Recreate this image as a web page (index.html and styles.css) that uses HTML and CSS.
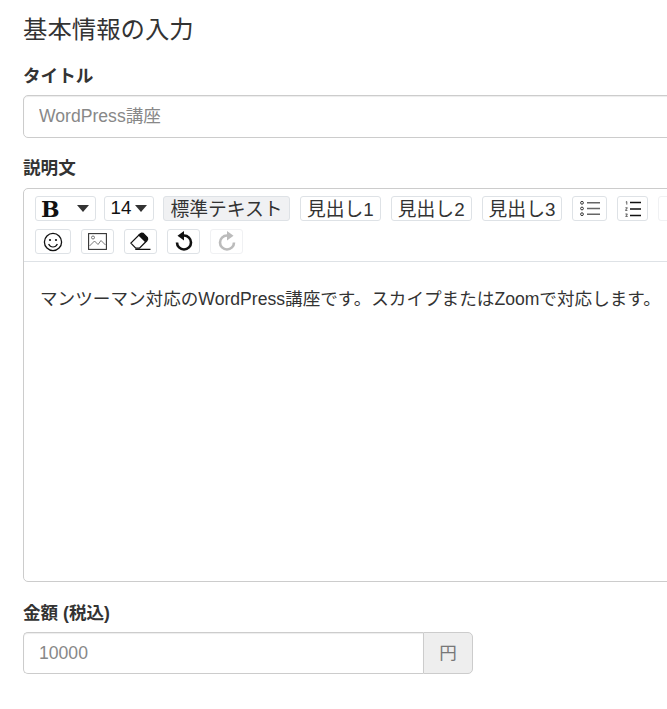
FILE: index.html
```html
<!DOCTYPE html>
<html lang="ja">
<head>
    <meta charset="UTF-8">
    <meta name="viewport" content="width=device-width, initial-scale=1.0">
    <title>基本情報の入力</title>
    <link rel="stylesheet" href="styles.css">
</head>
<body>
    <div class="page">
        <h2 class="page-title">基本情報の入力</h2>

        <div class="field field-title">
            <label class="field-label">タイトル</label>
            <input class="text-input" type="text" placeholder="WordPress講座">
        </div>

        <div class="field field-body">
            <label class="field-label">説明文</label>
            <div class="editor">
                <div class="toolbar">
                    <div class="toolbar-row">
                        <button class="tool tool-font"><span class="bold-b">B</span><span class="caret"></span></button>
                        <button class="tool tool-size"><span>14</span><span class="caret"></span></button>
                        <button class="tool tool-text tool-active">標準テキスト</button>
                        <button class="tool tool-text">見出し1</button>
                        <button class="tool tool-text">見出し2</button>
                        <button class="tool tool-text">見出し3</button>
                        <button class="tool tool-ul">
                            <svg width="20" height="15" viewBox="0 0 20 15">
                                <circle cx="2" cy="1.8" r="1.4" fill="none" stroke="#333" stroke-width="1"/>
                                <circle cx="2" cy="7.5" r="1.4" fill="none" stroke="#333" stroke-width="1"/>
                                <circle cx="2" cy="13.2" r="1.4" fill="none" stroke="#333" stroke-width="1"/>
                                <path d="M7 1.8h13M7 7.5h13M7 13.2h13" stroke="#666" stroke-width="1.5"/>
                            </svg>
                        </button>
                        <button class="tool tool-ol">
                            <svg width="16" height="16" viewBox="0 0 16 16">
                                <path d="M5 1.5h11M5 8h11M5 14.5h11" stroke="#111" stroke-width="1.5"/>
                                <path d="M.8 1l1-.4v3M.4 6.8h2l-2 2.6h2M.4 13h2l-1 1.2 1 1.2h-2" fill="none" stroke="#333" stroke-width=".8"/>
                            </svg>
                        </button>
                        <button class="tool tool-off tool-ol"></button>
                    </div>
                    <div class="toolbar-row">
                        <button class="tool tool-icon tool-smile">
                            <svg width="20" height="20" viewBox="0 0 20 20">
                                <circle cx="10" cy="10" r="8.6" fill="none" stroke="#111" stroke-width="1.3"/>
                                <circle cx="7" cy="8" r="1.1" fill="#111"/>
                                <circle cx="13" cy="8" r="1.1" fill="#111"/>
                                <path d="M5.6 12c1 2 2.6 3 4.4 3s3.4-1 4.4-3" fill="none" stroke="#111" stroke-width="1.2"/>
                            </svg>
                        </button>
                        <button class="tool tool-icon tool-image">
                            <svg width="19" height="17" viewBox="0 0 19 17">
                                <rect x=".6" y=".6" width="17.8" height="15.8" fill="none" stroke="#333" stroke-width="1.1"/>
                                <circle cx="5" cy="4.5" r="1.5" fill="none" stroke="#555" stroke-width=".8"/>
                                <path d="M1.5 13l5-5 3.5 3.5 3-4 4.5 4.5" fill="none" stroke="#555" stroke-width=".8"/>
                            </svg>
                        </button>
                        <button class="tool tool-icon tool-eraser">
                            <svg width="21" height="19" viewBox="0 0 20 18">
                                <path d="M.8 10.5L9.5 1.8 11 1l1.5.3 4 4 .3 1.5-.8 1.5-7 7H5.500z" fill="#fff" stroke="#111" stroke-width="1.2"/>
                                <path d="M9.5 1.8L11 1l1.5.3 4 4 .3 1.5-.8 1.5-1.5 1.5-7-7z" fill="#111"/>
                                <path d="M5 16.500h14.500" stroke="#111" stroke-width="1.2"/>
                            </svg>
                        </button>
                        <button class="tool tool-icon tool-undo">
                            <svg width="18" height="21" viewBox="0 0 18 21">
                                <path d="M7.5 4.5H9a7 7 0 1 1-7 7" fill="none" stroke="#111" stroke-width="2.6"/>
                                <path d="M9 0L2.5 4.7 9 9.5z" fill="#111"/>
                            </svg>
                        </button>
                        <button class="tool tool-icon tool-redo tool-off">
                            <svg width="18" height="21" viewBox="0 0 18 21">
                                <path d="M10.5 4.5H9a7 7 0 1 0 7 7" fill="none" stroke="#bbb" stroke-width="2.6"/>
                                <path d="M9 0l6.5 4.7L9 9.5z" fill="#bbb"/>
                            </svg>
                        </button>
                    </div>
                </div>
                <div class="editor-body">マンツーマン対応のWordPress講座です。スカイプまたはZoomで対応します。</div>
            </div>
        </div>

        <div class="field field-price">
            <label class="field-label">金額 (税込)</label>
            <div class="input-group">
                <input class="text-input" type="text" placeholder="10000">
                <span class="input-addon">円</span>
            </div>
        </div>
    </div>
</body>
</html>
```

FILE: styles.css
```css
html, body {
    margin: 0;
    height: 100%;
    overflow: hidden;
    background-color: #fff;
}
body {
    font-family: "Liberation Sans", "Noto Sans CJK JP", sans-serif;
    color: #333;
    font-size: 17.6px;
}
.page {
    width: 760px;
    padding: 0 0 0 23px;
}
.page-title {
    margin: 0;
    padding-top: 13px;
    font-size: 24.4px;
    line-height: 34px;
    font-weight: normal;
}
.field-label {
    display: block;
    font-size: 17.6px;
    font-weight: bold;
    line-height: 24px;
    margin-bottom: 7px;
}
.field-title {
    margin-top: 17px;
}
.field-body {
    margin-top: 18px;
}
.field-body .field-label {
    margin-bottom: 8px;
}
.field-price {
    margin-top: 19px;
}
.text-input {
    display: block;
    box-sizing: border-box;
    width: 100%;
    height: 43px;
    padding: 0 15px;
    border: 1px solid #ccc;
    border-radius: 5px;
    font-family: inherit;
    font-size: 17.6px;
    color: #333;
    box-shadow: inset 0 1px 1px rgba(0, 0, 0, 0.075);
    outline: none;
}
.text-input::placeholder {
    color: #888;
    opacity: 1;
}
.editor {
    box-sizing: border-box;
    height: 394px;
    border: 1px solid #ccc;
    border-radius: 5px;
}
.toolbar {
    height: 73px;
    box-sizing: border-box;
    padding: 7px 11px 0;
    border-bottom: 1px solid #dee2e6;
}
.toolbar-row {
    display: flex;
    gap: 10px;
    height: 25px;
    margin-bottom: 8px;
}
.tool {
    display: flex;
    align-items: center;
    justify-content: center;
    flex: none;
    box-sizing: border-box;
    height: 25px;
    padding: 0;
    background-color: #fff;
    border: 1px solid #dee2e6;
    border-radius: 3px;
    font-family: inherit;
    font-size: 18.8px;
    color: #333;
}
.tool-active {
    background-color: #f0f1f3;
    width: 127px;
    margin-left: -1px;
}
.tool-off {
    border-color: #f0f1f3;
}
.tool-font {
    width: 61px;
    justify-content: flex-start;
    padding-left: 5px;
}
.bold-b {
    font-family: "DejaVu Serif", serif;
    font-weight: bold;
    font-size: 22px;
    width: 36px;
    text-align: left;
    color: #111;
}
.tool-size {
    width: 50px;
    gap: 4px;
    margin-left: -2px;
    padding-bottom: 1px;
    color: #111;
}
.caret {
    width: 0;
    height: 0;
    border-left: 6px solid transparent;
    border-right: 6px solid transparent;
    border-top: 7px solid #333;
}
.tool-text {
    padding: 0 6px 2px;
}
.tool-ul {
    width: 35px;
}
.tool-ol {
    width: 31px;
}
.tool-icon {
    width: 33px;
}
.tool-smile {
    width: 36px;
}
.editor-body {
    padding: 25px 16px;
    line-height: 24px;
    white-space: nowrap;
}
.input-group {
    display: flex;
    width: 450px;
}
.input-group .text-input {
    flex: 1;
    width: auto;
    height: 42px;
    border-radius: 5px 0 0 5px;
    border-right: none;
}
.input-addon {
    display: flex;
    align-items: center;
    justify-content: center;
    box-sizing: border-box;
    width: 50px;
    padding-bottom: 3px;
    background-color: #eee;
    border: 1px solid #ccc;
    border-radius: 0 5px 5px 0;
    color: #777;
}
```
